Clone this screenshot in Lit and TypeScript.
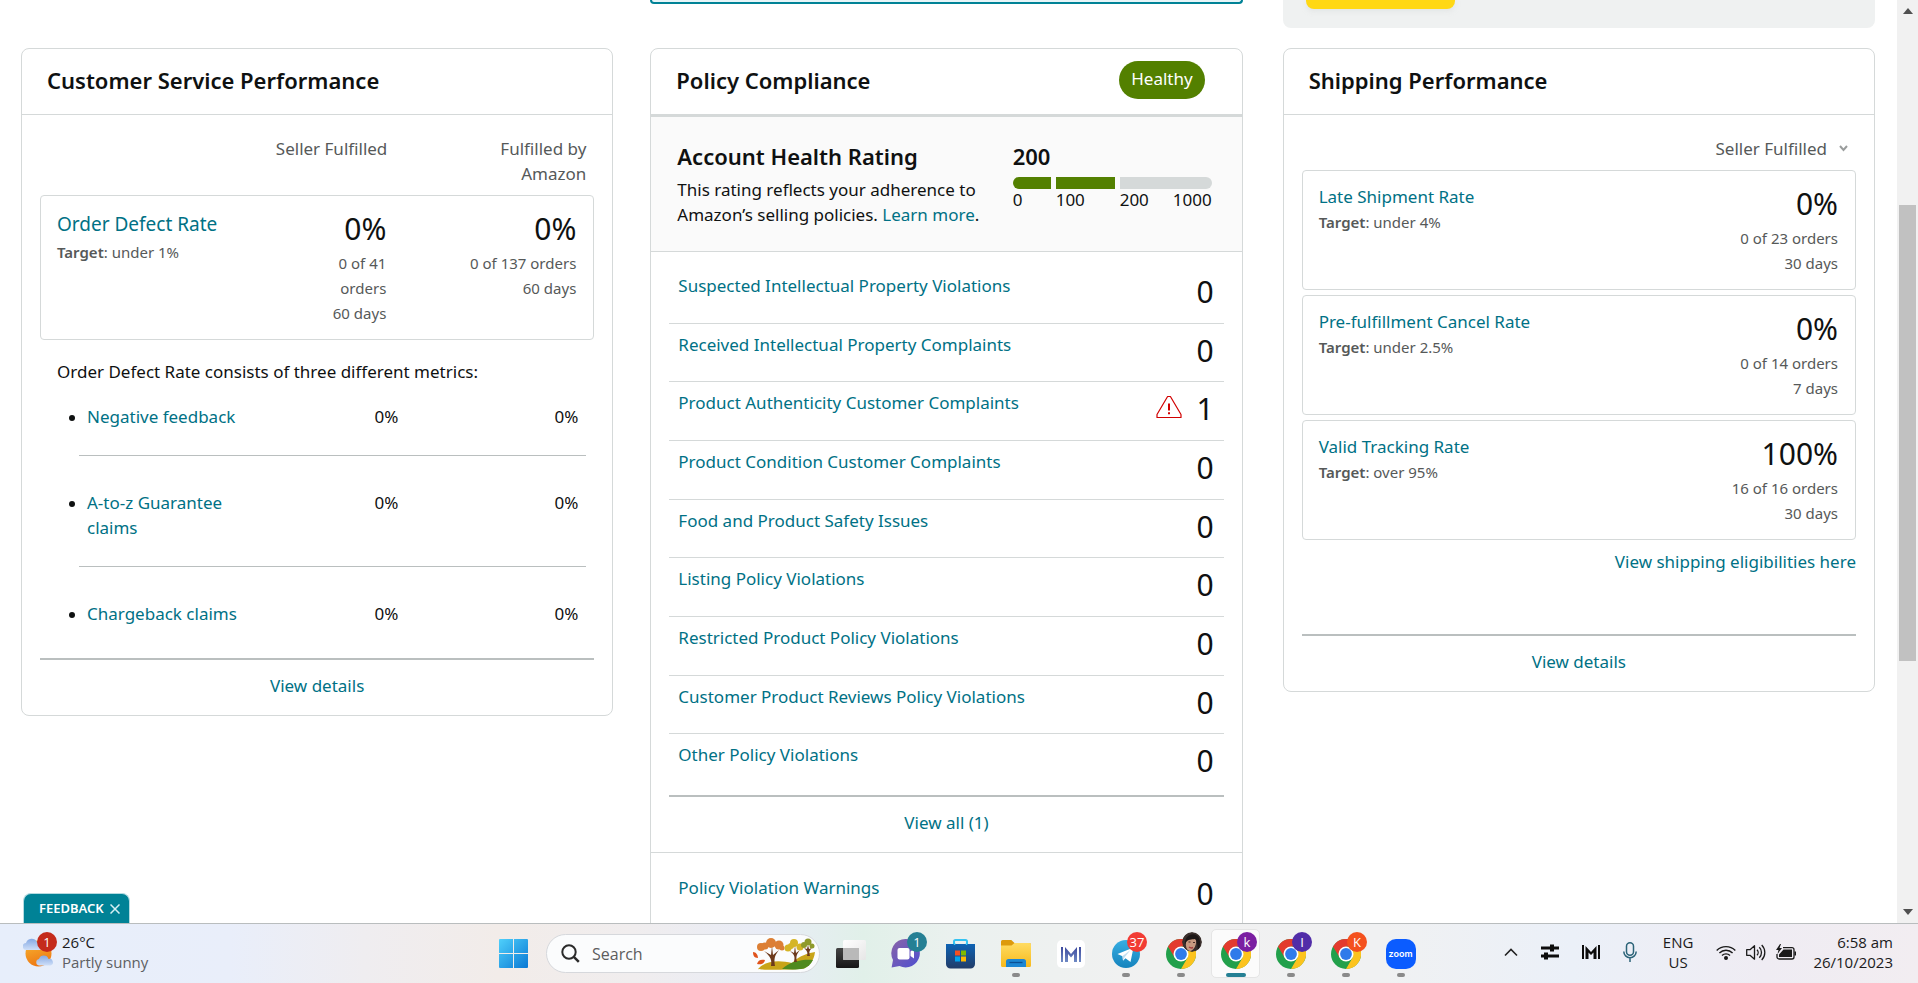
import { LitElement, html, css, svg, nothing } from "lit";
import { customElement } from "lit/decorators.js";
import { classMap } from "lit/directives/class-map.js";

const baseStyles = css`
  * {
    box-sizing: border-box;
  }
  a {
    color: #007185;
    text-decoration: none;
  }
  a:hover {
    text-decoration: underline;
  }
  b {
    font-weight: 600;
  }
  ul,
  h2,
  h3,
  p {
    margin: 0;
    padding: 0;
  }
  ul {
    list-style: none;
  }
  button,
  input,
  select {
    font: inherit;
    color: inherit;
    border: 0;
    padding: 0;
    background: none;
  }
  svg {
    display: block;
  }
`;

const cardStyles = css`
  :host {
    display: block;
    border: 1px solid #d5d9d9;
    border-radius: 8px;
    background: #fff;
  }
  .head {
    display: flex;
    align-items: center;
    justify-content: space-between;
    height: 66px;
    padding: 0 37px 4px 25px;
    border-bottom: 1px solid #d5d9d9;
  }
  h2,
  h3 {
    font-size: 22px;
    line-height: 28px;
    font-weight: 600;
  }
  .body {
    padding: 0 18px;
  }
  .box {
    display: flex;
    border: 1px solid #d5d9d9;
    border-radius: 4px;
    padding: 13px 17px 13px 16px;
  }
  .target {
    font-size: 15px;
    color: #565959;
  }
  .value {
    font-size: 30px;
    line-height: 40px;
  }
  .sub {
    font-size: 15px;
    color: #565959;
    text-align: right;
  }
  .sub .value {
    color: #0f1111;
    margin-bottom: 2px;
  }
  .foot {
    display: flex;
    justify-content: center;
    border-top: 2px solid #babfbf;
    padding: 13px 0 17px;
  }
`;

@customElement("service-card")
export class ServiceCard extends LitElement {
  static styles = [
    baseStyles,
    cardStyles,
    css`
      .cols {
        display: flex;
        justify-content: flex-end;
        padding: 21px 8px 9px 0;
        color: #565959;
        text-align: right;
      }
      .cols .fba {
        width: 112px;
        margin-left: 87px;
      }
      .name {
        flex: 1;
        padding-top: 3px;
      }
      .name a {
        display: block;
        font-size: 19px;
        margin-bottom: 3px;
      }
      .seller {
        width: 70px;
      }
      .fulfilled {
        width: 190px;
      }
      .intro {
        margin: 19px 0 20px 17px;
      }
      .metrics {
        padding: 0 8px 0 39px;
      }
      .metrics li {
        display: flex;
        position: relative;
        padding: 0 8px 26px;
        margin-bottom: 34px;
        border-bottom: 1px solid #babfbf;
      }
      .metrics li:last-child {
        border: 0;
        margin: 0;
        padding-bottom: 32px;
      }
      .metrics li::before {
        content: "";
        position: absolute;
        left: -10px;
        top: 11px;
        width: 6px;
        height: 6px;
        border-radius: 50%;
        background: #0f1111;
      }
      .metrics a {
        width: 160px;
      }
      .metrics span {
        flex: 1;
        text-align: right;
      }
      .metrics span:last-child {
        flex: none;
        width: 180px;
      }
    `,
  ];

  render() {
    return html`
      <div class="head"><h2>Customer Service Performance</h2></div>
      <div class="body">
        <div class="cols">
          <span>Seller Fulfilled</span>
          <span class="fba">Fulfilled by Amazon</span>
        </div>
        <div class="box">
          <div class="name">
            <a href="#odr">Order Defect Rate</a>
            <div class="target"><b>Target</b>: under 1%</div>
          </div>
          <div class="sub seller">
            <div class="value">0%</div>
            <div>0 of 41 orders</div>
            <div>60 days</div>
          </div>
          <div class="sub fulfilled">
            <div class="value">0%</div>
            <div>0 of 137 orders</div>
            <div>60 days</div>
          </div>
        </div>
        <p class="intro">Order Defect Rate consists of three different metrics:</p>
        <ul class="metrics">
          ${["Negative feedback", "A-to-z Guarantee claims", "Chargeback claims"].map(
            (m) => html`<li><a href="#metric">${m}</a><span>0%</span><span>0%</span></li>`
          )}
        </ul>
        <div class="foot"><a href="#details">View details</a></div>
      </div>
    `;
  }
}

@customElement("policy-card")
export class PolicyCard extends LitElement {
  static styles = [
    baseStyles,
    cardStyles,
    css`
      .head {
        height: 68px;
        border-bottom-width: 3px;
      }
      .pill {
        height: 38px;
        padding: 5px 12px 0;
        border-radius: 19px;
        background: #538000;
        color: #fff;
      }
      .rating {
        display: flex;
        justify-content: space-between;
        padding: 25px 30px 24px 26px;
        background: #fafafa;
        border-bottom: 1px solid #d5d9d9;
      }
      .rating h3 {
        margin-bottom: 7px;
      }
      .about {
        width: 316px;
      }
      .gauge {
        width: 199px;
      }
      .bar,
      .scale {
        display: grid;
        grid-template-columns: 38px 59px 1fr;
        gap: 5px;
      }
      .bar i {
        height: 12px;
        background: #538000;
      }
      .bar i:first-child {
        border-radius: 6px 0 0 6px;
      }
      .bar i:last-child {
        border-radius: 0 6px 6px 0;
        background: #d5d9d9;
      }
      .scale {
        line-height: 22px;
      }
      .scale span:last-child {
        display: flex;
        justify-content: space-between;
      }
      .list {
        display: flex;
        flex-direction: column;
        min-height: 527px;
        margin: 13px 0 3px;
      }
      .row {
        flex: 1;
        display: flex;
        align-items: flex-start;
        padding: 7px 10px 10px 9px;
        border-bottom: 1px solid #d5d9d9;
      }
      .row:last-child {
        border: 0;
      }
      .row a {
        flex: 1;
        padding-top: 1px;
      }
      .row svg {
        margin: 6px 14px 0 0;
      }
      .warnings {
        padding: 14px 18px;
        border-top: 1px solid #d5d9d9;
      }
    `,
  ];

  private row(label: string, count = 0) {
    return html`<li class="row">
      <a href="#policy">${label}</a>
      ${count
        ? html`<svg width="26" height="24" viewBox="0 0 26 24" fill="none" stroke="#d10000" stroke-width="1.2">
            <path d="M11.6 1.5h2.8L25 19.5v3H1v-3z" stroke-linejoin="round" />
            <path d="M13 8.5v7M13 17.3v2" stroke-width="2" />
          </svg>`
        : nothing}
      <span class="value">${count}</span>
    </li>`;
  }

  render() {
    return html`
      <div class="head"><h2>Policy Compliance</h2><span class="pill">Healthy</span></div>
      <div class="rating">
        <div class="about">
          <h3>Account Health Rating</h3>
          <p>This rating reflects your adherence to Amazon’s selling policies. <a href="#learn">Learn more</a>.</p>
        </div>
        <div class="gauge">
          <h3>200</h3>
          <div class="bar"><i></i><i></i><i></i></div>
          <div class="scale">
            <span>0</span><span>100</span><span><span>200</span><span>1000</span></span>
          </div>
        </div>
      </div>
      <div class="body">
        <ul class="list">
          ${this.row("Suspected Intellectual Property Violations")}
          ${this.row("Received Intellectual Property Complaints")}
          ${this.row("Product Authenticity Customer Complaints", 1)}
          ${this.row("Product Condition Customer Complaints")}
          ${this.row("Food and Product Safety Issues")}
          ${this.row("Listing Policy Violations")}
          ${this.row("Restricted Product Policy Violations")}
          ${this.row("Customer Product Reviews Policy Violations")}
          ${this.row("Other Policy Violations")}
        </ul>
        <div class="foot"><a href="#all">View all (1)</a></div>
      </div>
      <ul class="warnings">
        ${this.row("Policy Violation Warnings")}
      </ul>
    `;
  }
}

@customElement("shipping-card")
export class ShippingCard extends LitElement {
  static styles = [
    baseStyles,
    cardStyles,
    css`
      .picker {
        display: flex;
        align-items: center;
        justify-content: flex-end;
        gap: 12px;
        padding: 21px 8px 9px 0;
        color: #565959;
      }
      select {
        appearance: none;
        height: 25px;
        text-align: right;
      }
      .boxes {
        display: grid;
        gap: 5px;
      }
      .name {
        flex: 1;
      }
      .name a {
        display: block;
        margin-bottom: 1px;
      }
      .eligible {
        display: flex;
        justify-content: flex-end;
        padding: 9px 0 60px;
      }
    `,
  ];

  private box(name: string, target: string, value: string, orders: string, days: string) {
    return html`<div class="box">
      <div class="name">
        <a href="#rate">${name}</a>
        <div class="target"><b>Target</b>: ${target}</div>
      </div>
      <div class="sub">
        <div class="value">${value}</div>
        <div>${orders}</div>
        <div>${days}</div>
      </div>
    </div>`;
  }

  render() {
    return html`
      <div class="head"><h2>Shipping Performance</h2></div>
      <div class="body">
        <label class="picker">
          <select aria-label="Fulfilment channel">
            <option>Seller Fulfilled</option>
          </select>
          <svg width="9" height="7" viewBox="0 0 9 7" fill="none" stroke="#9a9d9d" stroke-width="2">
            <path d="M1 1l3.5 4L8 1" />
          </svg>
        </label>
        <div class="boxes">
          ${this.box("Late Shipment Rate", "under 4%", "0%", "0 of 23 orders", "30 days")}
          ${this.box("Pre-fulfillment Cancel Rate", "under 2.5%", "0%", "0 of 14 orders", "7 days")}
          ${this.box("Valid Tracking Rate", "over 95%", "100%", "16 of 16 orders", "30 days")}
        </div>
        <div class="eligible"><a href="#eligible">View shipping eligibilities here</a></div>
        <div class="foot"><a href="#details">View details</a></div>
      </div>
    `;
  }
}

const chrome = svg`
  <circle cx="15" cy="15" r="15" fill="#22a04b"/>
  <path d="M28 7.5A15 15 0 0 1 15 30l6.5-11.3L22 7.5z" fill="#fcc31e"/>
  <path d="M2 7.5A15 15 0 0 1 28 7.5H15L8.6 18.6z" fill="#e33b2e"/>
  <circle cx="15" cy="15" r="7.5" fill="#fff"/>
  <circle cx="15" cy="15" r="5.9" fill="#2f7bea"/>`;

const icons = {
  start: html`<svg width="29" height="29" viewBox="0 0 29 29">
    <defs><linearGradient id="w" x1="0" y1="0" x2="1" y2="1">
      <stop offset="0" stop-color="#4fd0fb" /><stop offset="1" stop-color="#0a78d4" /></linearGradient></defs>
    <path fill="url(#w)" d="M1 0h13v14H0V1a1 1 0 0 1 1-1zM15 0h13a1 1 0 0 1 1 1v13H15zM0 15h14v14H1a1 1 0 0 1-1-1zM15 15h14v13a1 1 0 0 1-1 1H15z" />
  </svg>`,
  task: html`<svg width="30" height="28" viewBox="0 0 30 28">
    <defs>
      <linearGradient id="t" x1="0" y1="0" x2="0" y2="1"><stop offset="0" stop-color="#444" /><stop offset="1" stop-color="#161616" /></linearGradient>
      <linearGradient id="u" x1="0" y1="0" x2="1" y2="1"><stop offset="0" stop-color="#fff" /><stop offset="1" stop-color="#e6e6e6" /></linearGradient>
    </defs>
    <rect y="8" width="23" height="20" rx="1.5" fill="url(#t)" />
    <rect x="7" width="23" height="20" rx="1.5" fill="url(#u)" />
    <path d="M7 8h16v12H8.5a1.5 1.5 0 0 1-1.5-1.5z" fill="#b9b9b9" />
  </svg>`,
  chat: html`<svg width="29" height="29" viewBox="0 0 29 29">
    <defs><linearGradient id="c" x1="0" y1="0" x2="1" y2="1"><stop offset="0" stop-color="#8a63a8" /><stop offset="1" stop-color="#4e4fd0" /></linearGradient></defs>
    <path d="M14.5 0a14.2 14.2 0 1 1-6 27L.6 28.4 2 21A14.2 14.2 0 0 1 14.5 0z" fill="url(#c)" />
    <rect x="6.5" y="9" width="12" height="11.5" rx="2" fill="#fff" />
    <path d="M19.500 12.500 23 10v9.500l-3.500-2.500z" fill="#fff" />
  </svg>`,
  store: html`<svg width="29" height="30" viewBox="0 0 29 30">
    <defs><linearGradient id="s" x1="0" y1="0" x2="0" y2="1"><stop offset="0" stop-color="#0d63b4" /><stop offset="1" stop-color="#223c68" /></linearGradient></defs>
    <path d="M8 6V2.500A1.500 1.500 0 0 1 9.500 1h10A1.500 1.500 0 0 1 21 2.500V6" fill="none" stroke="#35c3f2" stroke-width="2" />
    <path d="M0 5h29v20a4.500 4.500 0 0 1-4.500 4.500h-20A4.500 4.500 0 0 1 0 25z" fill="url(#s)" />
    <path d="M9 11.500h5v5H9z" fill="#f25022" /><path d="M15 11.500h5v5h-5z" fill="#7fba00" />
    <path d="M9 17.500h5v5H9z" fill="#00a4ef" /><path d="M15 17.500h5v5h-5z" fill="#ffb900" />
    <path d="M7.800 5h1.500M19.800 5h1.500" stroke="#35c3f2" stroke-width="2" />
  </svg>`,
  files: html`<svg width="30" height="27" viewBox="0 0 30 27">
    <defs><linearGradient id="f" x1="0" y1="0" x2="0" y2="1"><stop offset="0" stop-color="#ffdc62" /><stop offset="1" stop-color="#f7b91c" /></linearGradient></defs>
    <path d="M0 1.500A1.500 1.500 0 0 1 1.500 0h8.800l3.200 3H28.500A1.500 1.500 0 0 1 30 4.500V12H0z" fill="#dd9a0c" />
    <path d="M0 5.500h10.500L13.500 3h15A1.500 1.500 0 0 1 30 4.500v21a1.500 1.500 0 0 1-1.500 1.500h-27A1.500 1.500 0 0 1 0 25.500z" fill="url(#f)" />
    <path d="M5 27v-5.500A2.500 2.500 0 0 1 7.500 19h15a2.500 2.500 0 0 1 2.500 2.500V27z" fill="#1d86d3" />
    <path d="M8.500 22.500h13" stroke="#0b4f94" stroke-width="1.300" />
  </svg>`,
  meter: html`<svg width="28" height="28" viewBox="0 0 28 28">
    <defs><linearGradient id="m" x1="0" y1="0" x2="0" y2="1"><stop offset="0" stop-color="#3d4a9e" /><stop offset="1" stop-color="#6f8ac4" /></linearGradient></defs>
    <rect width="28" height="28" rx="5" fill="#fff" />
    <path d="M4 7h2v15H4zM22 7h2v15h-2zM8 7l6 7 6-7v15h-3v-8l-3 3.500-3-3.500v8H8z" fill="url(#m)" />
  </svg>`,
  telegram: html`<svg width="28" height="28" viewBox="0 0 28 28">
    <defs><linearGradient id="g" x1="0" y1="0" x2="0" y2="1"><stop offset="0" stop-color="#37aee2" /><stop offset="1" stop-color="#1583bd" /></linearGradient></defs>
    <circle cx="14" cy="14" r="14" fill="url(#g)" />
    <path d="M5.500 14 21.500 7.500l-3 14.500-5-3.800-2.500 2.500-.5-4.500z" fill="#fff" />
    <path d="m10.500 16 8-6-6 7.500-1.500 3z" fill="#c4dff0" />
  </svg>`,
  chrome: html`<svg width="30" height="30" viewBox="0 0 30 30">${chrome}</svg>`,
  up: html`<svg width="14" height="9" viewBox="0 0 14 9" fill="none" stroke="#222" stroke-width="1.600"><path d="M1 7.500 7 1.500l6 6" /></svg>`,
  sliders: html`<svg width="18" height="16" viewBox="0 0 18 16"><path d="M0 2.500h9V0.500h4v2h5v3h-5v2H9v-2H0zM0 10.500h3v-2h4v2h11v3H7v2H3v-2H0z" fill="#0c0c0c" /></svg>`,
  meterTray: html`<svg width="18" height="14" viewBox="0 0 18 14"><path d="M0 0h2v14H0zM16 0h2v14h-2zM3.500 1l5.500 6 5.500-6v13h-3V7.500L9 10 6.500 7.500V14h-3z" fill="#0c0c0c" /></svg>`,
  mic: html`<svg width="14" height="20" viewBox="0 0 14 20" fill="none" stroke="#2b6378" stroke-width="1.500"><rect x="3.500" y="0.800" width="7" height="12.500" rx="3.500" /><path d="M0.800 9.500a6.200 6.200 0 0 0 12.400 0M7 16v4" /></svg>`,
  wifi: html`<svg width="20" height="15" viewBox="0 0 20 15" fill="none" stroke="#1a1a1a" stroke-width="1.400"><path d="M0.700 5.500a13 13 0 0 1 18.600 0M3.400 8a9.300 9.300 0 0 1 13.200 0M6 10.600a5.600 5.600 0 0 1 8 0" /><circle cx="10" cy="13" r="1.300" fill="#1a1a1a" /></svg>`,
  sound: html`<svg width="20" height="17" viewBox="0 0 20 17" fill="none" stroke="#1a1a1a" stroke-width="1.300"><path d="M0.700 5.700h3.300L8.500 1.800v13.400L4 11.300H0.700z" stroke-linejoin="round" /><path d="M11 5.700a4 4 0 0 1 0 5.600M13.300 3.300a7.300 7.300 0 0 1 0 10.400M15.700 1a10.600 10.600 0 0 1 0 15" /></svg>`,
  battery: html`<svg width="20" height="16" viewBox="0 0 20 16"><path d="M7 3.700h9a2 2 0 0 1 2 2V13a2 2 0 0 1-2 2H3a2 2 0 0 1-2-2v-3" fill="none" stroke="#1a1a1a" stroke-width="1.300" /><path d="M7.500 5.500H16V13H3v-2.500zM18.500 7.500h1.500v4h-1.500z" fill="#1a1a1a" /><path d="M4 0 0 6h2.500L1.500 10 6 4H3.500L5 0z" fill="#1a1a1a" /></svg>`,
  weather: html`<svg width="31" height="29" viewBox="0 0 31 29">
    <defs>
      <linearGradient id="a" x1="0" y1="0" x2="0.300" y2="1"><stop offset="0" stop-color="#f7b733" /><stop offset="1" stop-color="#ee7a14" /></linearGradient>
      <linearGradient id="b" x1="0" y1="0" x2="0" y2="1"><stop offset="0" stop-color="#86a9e3" /><stop offset="1" stop-color="#cfdff8" /></linearGradient>
    </defs>
    <circle cx="15.500" cy="15.500" r="13" fill="url(#a)" />
    <path d="M3.500 12A3.500 3.500 0 0 1 3 5a6 6 0 0 1 11-1 4 4 0 0 1 3 8z" fill="url(#b)" />
    <path d="M16 27.500a3.300 3.300 0 0 1 0-6.500 5 5 0 0 1 9.500 0 3.300 3.300 0 0 1 2 6.500z" fill="url(#b)" />
  </svg>`,
  trees: html`<svg width="64" height="32" viewBox="0 0 64 32">
    <path d="M6 31C14 22 28 22 40 25c8-8 17-10 23-11-1 9-6 14-11 16.500C44 32 10 32 6 31z" fill="#c9a419" />
    <path d="M30 31c8-8 22-10 31-9-2 4-5 7-9 8.500-8 1.500-15 1-22 .5z" fill="#4f8a1e" />
    <path d="M19 28c1-6 0-9-7-15l7 4 1-9 1 9 6-5c-5 6-5 10-4 16zM42 24c1-5 1-7-4-11l4 2 1-7 1 7 4-3c-4 5-4 7-3 12zM55 18c1-4 0-5-3-8l3 1 1-4 1 4 3-1c-3 3-3 4-2 8z" fill="#6d3a1c" />
    <g fill="#dc7f35"><circle cx="19" cy="5" r="5" /><circle cx="9" cy="9" r="4" /><circle cx="13" cy="8" r="3.500" /><circle cx="27" cy="7" r="4.500" /><circle cx="30" cy="10" r="2.500" /></g>
    <g fill="#d5b526"><circle cx="42" cy="5" r="4" /><circle cx="36" cy="10" r="3.500" /><circle cx="39" cy="8" r="3" /><circle cx="48" cy="9" r="3.500" /></g>
    <g fill="#8f9a2a"><circle cx="56" cy="4" r="3.500" /><circle cx="52" cy="7" r="3" /><circle cx="60" cy="8" r="2.500" /></g>
    <path d="M1 14c3 0 5 3 5 6-4 0-5-3-5-6zM5 26c1-4 4-5 8-4-1 4-4 5-8 4z" fill="#e0531c" />
  </svg>`,
  search: html`<svg width="19" height="19" viewBox="0 0 19 19" fill="none" stroke="#2a2a2a"><circle cx="8" cy="8" r="6.700" stroke-width="2" /><path d="m12.800 12.800 5 5" stroke-width="2.500" /></svg>`,
  face: html`<svg width="20" height="20" viewBox="0 0 20 20">
    <circle cx="10" cy="10" r="10" fill="#3b302d" />
    <ellipse cx="9" cy="11" rx="5" ry="8" fill="#c99a80" transform="rotate(12 9 11)" />
    <path d="M3 12C2 2 14 -1 17 6c2 5 1 9-1 12-1-4 0-8-3-11C10 8 6 6 3 12z" fill="#1e1817" />
    <path d="M6.500 10h2M11 10.500h2" stroke="#4a2f28" stroke-width="1" />
    <path d="M7 15q2 1.500 4 .5" stroke="#a33c3c" stroke-width="1.500" fill="none" />
  </svg>`,
};

type App = { name: string; icon: unknown; badge?: unknown; tone?: string; open?: boolean; active?: boolean };

@customElement("task-bar")
export class TaskBar extends LitElement {
  static styles = [
    baseStyles,
    css`
      :host {
        display: grid;
        grid-template-columns: 1fr auto 1fr;
        align-items: center;
        height: 60px;
        border-top: 1px solid #b9bdbe;
        font-family: "Open Sans", "Noto Sans", sans-serif;
        font-size: 15px;
        line-height: 20px;
        color: #1b1b1b;
        background: linear-gradient(
          90deg,
          #e7eefb 0%,
          #e9eefa 12%,
          #efedf0 19%,
          #f2ece9 26%,
          #f0edee 33%,
          #e8ecf6 40%,
          #e1f0e9 45%,
          #ebf1ef 50%,
          #f1f1f1 60%,
          #f0f1f2 72%,
          #ebf0f8 82%,
          #efecf3 92%,
          #f2edf1 100%
        );
      }
      .weather {
        display: flex;
        align-items: center;
        gap: 8px;
        padding: 0 0 3px 23px;
        text-align: left;
      }
      .pic {
        position: relative;
      }
      .soft {
        color: #5d5f63;
      }
      .center {
        display: flex;
        align-items: center;
        padding-right: 4px;
      }
      .app {
        position: relative;
        display: grid;
        place-items: center;
        width: 49px;
        height: 49px;
        margin: 0 3px;
        border-radius: 5px;
        border: 1px solid transparent;
      }
      .app.active {
        background: #fbfbfb;
        border-color: #e5e5e5;
      }
      .app.open::after {
        content: "";
        position: absolute;
        bottom: 0;
        width: 8px;
        height: 4px;
        border-radius: 2px;
        background: #8a8a8a;
      }
      .app.active::after {
        width: 20px;
        background: #258094;
      }
      .badge {
        position: absolute;
        top: 2px;
        right: 2px;
        display: grid;
        place-items: center;
        width: 20px;
        height: 20px;
        border-radius: 50%;
        color: #fff;
        font-size: 13px;
        overflow: hidden;
      }
      .teal {
        background: #258094;
      }
      .red {
        background: #f23c34;
      }
      .plum {
        background: #7b1fa2;
      }
      .violet {
        background: #512da8;
      }
      .orange {
        background: #f4511e;
      }
      .crimson {
        background: #c42b1c;
        top: -6px;
        right: -3px;
      }
      .search {
        display: flex;
        align-items: center;
        gap: 12px;
        width: 274px;
        height: 39px;
        margin: 0 3px 0 5px;
        padding: 0 3px 0 14px;
        border: 1px solid #d6d8dc;
        border-radius: 20px;
        background: #fbfcfd;
        font-size: 16px;
      }
      .search input {
        flex: 1;
        min-width: 0;
        outline: 0;
      }
      .search input::placeholder {
        color: #5d5d5d;
        opacity: 1;
      }
      .zoom {
        display: grid;
        place-items: center;
        width: 30px;
        height: 30px;
        border-radius: 10px;
        background: #0b5cff;
        color: #fff;
        font-size: 9px;
        line-height: 12px;
        font-weight: 600;
        font-family: Inter, sans-serif;
      }
      .tray {
        display: flex;
        align-items: center;
        justify-content: flex-end;
        padding: 0 25px 3px 0;
      }
      .quick {
        display: flex;
        align-items: center;
        gap: 23px;
        margin-right: 26px;
      }
      .status {
        display: flex;
        align-items: center;
        gap: 10px;
        margin: 0 17px 0 23px;
      }
      .lang {
        text-align: center;
      }
      .clock {
        text-align: right;
      }
    `,
  ];

  private apps: App[] = [
    { name: "Task view", icon: icons.task },
    { name: "Chat", icon: icons.chat, badge: "1", tone: "teal" },
    { name: "Store", icon: icons.store },
    { name: "File Explorer", icon: icons.files, open: true },
    { name: "Meter", icon: icons.meter },
    { name: "Telegram", icon: icons.telegram, badge: "37", tone: "red", open: true },
    { name: "Chrome", icon: icons.chrome, badge: icons.face, tone: "photo", open: true },
    { name: "Chrome k", icon: icons.chrome, badge: "k", tone: "plum", open: true, active: true },
    { name: "Chrome I", icon: icons.chrome, badge: "I", tone: "violet", open: true },
    { name: "Chrome K", icon: icons.chrome, badge: "K", tone: "orange", open: true },
    { name: "Zoom", icon: html`<span class="zoom">zoom</span>`, open: true },
  ];

  render() {
    return html`
      <button class="weather" aria-label="Weather">
        <span class="pic">${icons.weather}<span class="badge crimson">1</span></span>
        <span>26°C<br /><span class="soft">Partly sunny</span></span>
      </button>
      <div class="center">
        <button class="app" aria-label="Start">${icons.start}</button>
        <label class="search">
          ${icons.search}
          <input type="text" placeholder="Search" aria-label="Search" />
          ${icons.trees}
        </label>
        ${this.apps.map(
          (a) => html`<button
            class=${classMap({ app: true, open: !!a.open, active: !!a.active })}
            aria-label=${a.name}
          >
            ${a.icon}${a.badge ? html`<span class="badge ${a.tone}">${a.badge}</span>` : nothing}
          </button>`
        )}
      </div>
      <div class="tray">
        <div class="quick">${icons.up}${icons.sliders}${icons.meterTray}${icons.mic}</div>
        <div class="lang">ENG<br />US</div>
        <div class="status">${icons.wifi}${icons.sound}${icons.battery}</div>
        <div class="clock">6:58 am<br />26/10/2023</div>
      </div>
    `;
  }
}

@customElement("app-root")
export class AppRoot extends LitElement {
  static styles = [
    baseStyles,
    css`
      :host {
        display: flex;
        flex-direction: column;
        height: 100vh;
        overflow: hidden;
        background: #fff;
        color: #0f1111;
        font-family: "Noto Sans", "Open Sans", sans-serif;
        font-size: 17px;
        line-height: 25px;
      }
      .view {
        flex: 1;
        min-height: 0;
        display: flex;
        position: relative;
      }
      .page {
        flex: 1;
        overflow: hidden;
        display: grid;
        grid-template-columns: minmax(0, 1fr) 37px minmax(0, 1fr) 40px minmax(0, 1fr);
        grid-template-rows: 28px auto;
        row-gap: 20px;
        align-items: start;
        padding: 0 22px 0 21px;
      }
      service-card {
        grid-column: 1;
      }
      policy-card,
      .notice {
        grid-column: 3;
      }
      shipping-card,
      .promo {
        grid-column: 5;
      }
      .notice {
        height: 4px;
        border: 2px solid #008296;
        border-top: 0;
        border-radius: 0 0 6px 6px;
        background: #e6f5f8;
      }
      .promo {
        height: 28px;
        padding-left: 23px;
        border-radius: 0 0 8px 8px;
        background: #eff1f1;
      }
      .promo button {
        display: block;
        width: 149px;
        height: 9px;
        border-radius: 0 0 8px 8px;
        background: #ffd814;
        box-shadow: 0 2px 5px rgba(213, 217, 217, 0.5);
      }
      .scroll {
        display: flex;
        flex-direction: column;
        justify-content: space-between;
        align-items: center;
        width: 21px;
        padding: 8px 0;
        background: #f1f1f1;
      }
      .thumb {
        flex: 0 1 456px;
        width: 17px;
        margin-bottom: 58px;
        background: #c1c1c1;
      }
      .feedback {
        position: absolute;
        left: 23px;
        bottom: 0;
        display: flex;
        align-items: center;
        gap: 6px;
        height: 30px;
        padding: 0 9px 0 15px;
        border: 1px solid #b4dbe1;
        border-bottom: 0;
        border-radius: 8px 8px 0 0;
        background: #008296;
        color: #fff;
        font-size: 13px;
        font-weight: 600;
      }
    `,
  ];

  render() {
    return html`
      <div class="view">
        <main class="page">
          <div class="notice"></div>
          <div class="promo"><button aria-label="Continue"></button></div>
          <service-card></service-card>
          <policy-card></policy-card>
          <shipping-card></shipping-card>
        </main>
        <div class="scroll">
          <svg width="10" height="6" viewBox="0 0 10 6"><path d="M0 6 5 0l5 6z" fill="#505050" /></svg>
          <div class="thumb"></div>
          <svg width="10" height="6" viewBox="0 0 10 6"><path d="M0 0h10L5 6z" fill="#505050" /></svg>
        </div>
        <button class="feedback">
          FEEDBACK
          <svg width="10" height="10" viewBox="0 0 10 10" stroke="#d6f0f4" stroke-width="1.500"><path d="m.5.5 9 9m0-9-9 9" /></svg>
        </button>
      </div>
      <task-bar></task-bar>
    `;
  }
}
